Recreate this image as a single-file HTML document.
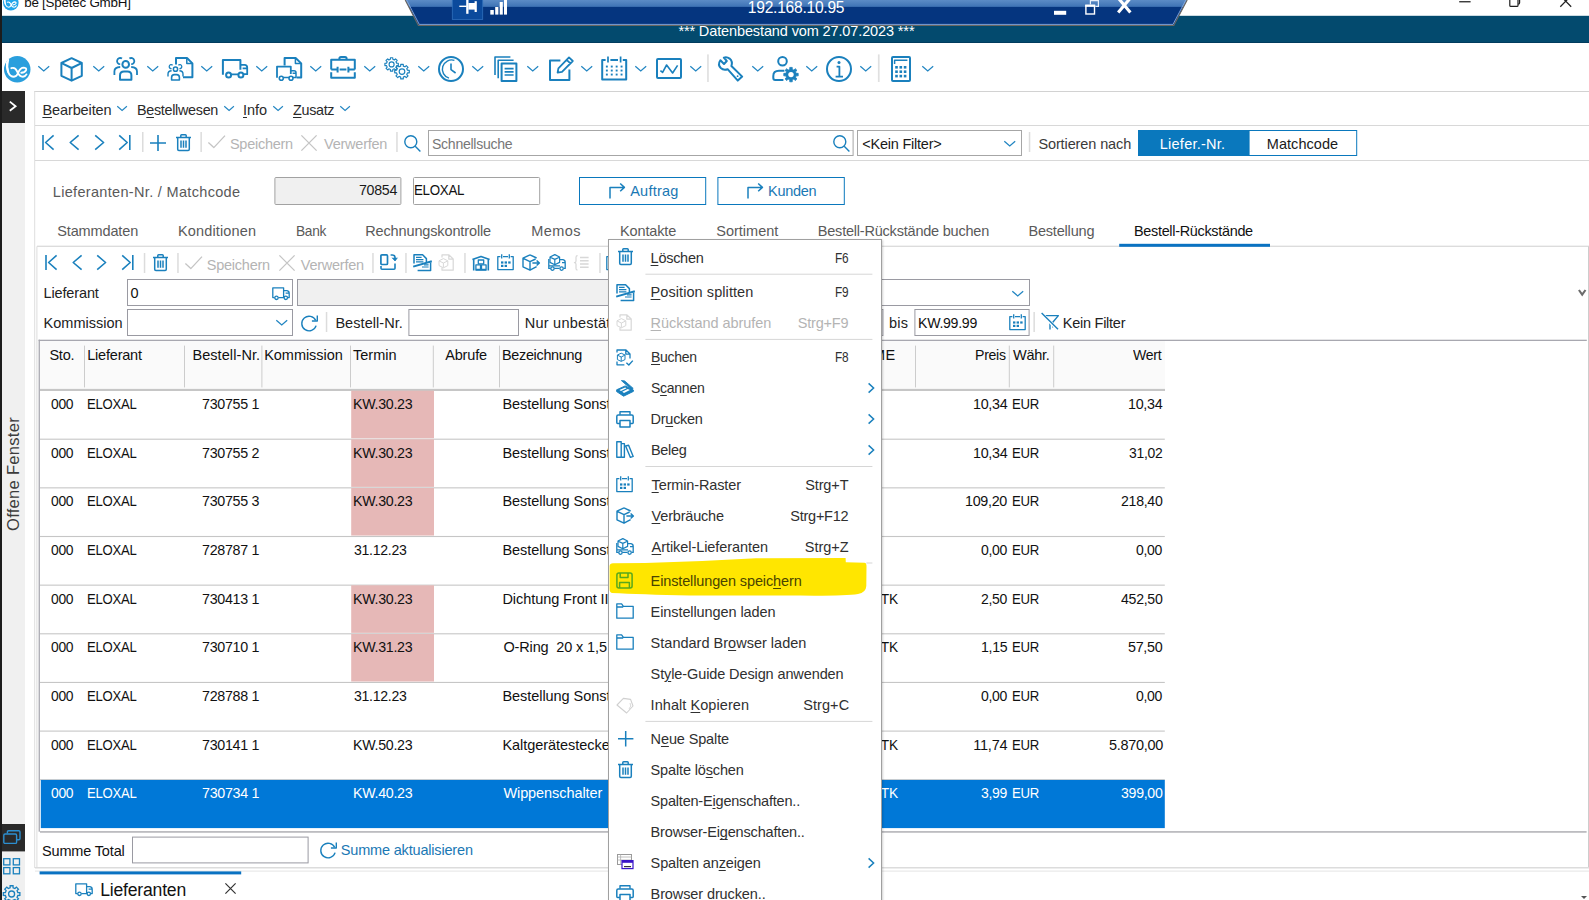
<!DOCTYPE html>
<html lang="de"><head><meta charset="utf-8"><title>be [Spetec GmbH]</title>
<style>
html,body{margin:0;padding:0;background:#fff;}
body{width:1589px;height:900px;position:relative;overflow:hidden;font:14.5px/20px 'Liberation Sans', sans-serif;color:#1a1a1a;}
body>div,body>span,body>svg{position:absolute;}
span{white-space:pre;}
u{text-decoration:underline;text-decoration-thickness:1px;text-underline-offset:2px;}
svg{overflow:visible;}

</style></head><body>
<svg style="left:1.70px;top:-5.90px" width="17.60" height="17.60" viewBox="1.70 -5.90 17.60 17.60"><g transform="translate(10.50,2.90) scale(0.5865) translate(-17.55,-68.45)"><circle cx="17.55" cy="68.45" r="13.3" fill="#22a6ea"/><g fill="none" stroke="#fff" stroke-linecap="round" stroke-linejoin="round"><path d="M8.5,59.2 Q6.4,66.6 8.9,72.4 Q10.4,76 14.2,76 Q17,75.8 18.4,72.2 Q20.4,66.8 24.2,66.8 Q27.2,67.2 26.4,69.4 Q25.4,71.8 21.6,72" stroke-width="1.9"/><path d="M7.4,61.6 Q6.6,66 8.4,71" stroke-width="2.2"/><path d="M11.6,67.4 Q15.4,66 17.4,70.6 Q19.6,76 23.2,76 Q25.6,75.8 26.8,73.6" stroke-width="1.9"/></g></g></svg>
<span style="left:24.20px;top:-6.74px;font-size:13.4px;color:#111;letter-spacing:-0.23px;">be [Spetec GmbH]</span>
<svg style="left:1459px;top:1px" width="12" height="2" viewBox="1459 1 12 2"><rect x="1459.2" y="1.1" width="11.4" height="1.3" fill="#2a2a2a"/></svg>
<svg style="left:1505px;top:0px;" width="20" height="10" viewBox="0 0 20 10"><g fill="none" stroke="#1e1e1e" stroke-width="1.2"><path d="M4.8,-2 V5.4 Q4.8,6.4 5.8,6.4 H12 Q13,6.4 13,5.4 V-2"/><path d="M13.2,4.2 Q14.6,4.2 14.6,2.8 V-2"/></g></svg>
<svg style="left:1560px;top:-5px;" width="12" height="12" viewBox="0 0 12 12"><path d="M0.3,0.6 L11.2,11.8 M11.2,0.6 L0.3,11.8" stroke="#222" stroke-width="1.25" fill="none"/></svg>
<svg style="left:0px;top:15px" width="1589" height="28" viewBox="0 15 1589 28"><rect x="0" y="15.8" width="1589" height="27.2" fill="#034a6e"/><rect x="0" y="42.2" width="1589" height="0.8" fill="#02395a"/></svg>
<span style="left:678.40px;top:21.18px;color:#fff;letter-spacing:-0.12px;">*** Datenbestand vom 27.07.2023 ***</span>
<svg style="left:400px;top:0" width="800" height="28" viewBox="400 0 800 28">
<defs><linearGradient id="rg" x1="0" y1="0" x2="0" y2="1"><stop offset="0" stop-color="#5b8bc6"/><stop offset="0.255" stop-color="#3f74b6"/><stop offset="0.262" stop-color="#05357f"/><stop offset="1" stop-color="#05357f"/></linearGradient></defs>
<path d="M405.2,0 L418.4,25.4 H1173.8 L1187.2,0 Z" fill="url(#rg)"/>
<path d="M405.2,0 L418.4,25.4 H1173.8 L1187.2,0" fill="none" stroke="#6b6660" stroke-width="1.1"/>
<path d="M406.6,0 L419.3,24.4 H1173 L1185.8,0" fill="none" stroke="#86a8dc" stroke-width="0.9"/>
<rect x="452.3" y="-1" width="30.4" height="20.4" fill="#0b4a9c" stroke="#2f6fbb" stroke-width="0.8"/>
<g fill="#fff"><rect x="459.3" y="5.6" width="7.4" height="1.4"/><rect x="466.2" y="-1" width="2.3" height="14.8"/><rect x="468.4" y="3" width="7" height="6.6"/><rect x="474.6" y="1.2" width="2.2" height="10.8"/>
<rect x="490.3" y="10" width="3.5" height="4.6"/><rect x="495.2" y="7" width="3.2" height="7.6"/><rect x="499.7" y="2" width="3.1" height="12.6"/><rect x="504" y="-1" width="3" height="15.6"/>
<rect x="1054" y="10.8" width="12.2" height="4"/></g>
<g fill="none" stroke="#fff"><rect x="1085.9" y="5.8" width="8.6" height="8.2" stroke-width="1.4"/><path d="M1085.2,5.6 H1095.2" stroke-width="2.2"/><path d="M1090.4,4.4 V0.6 H1098.4 V6.4 H1095.4" stroke-width="1.2" stroke="#e6eefa"/>
<path d="M1118.2,-2 L1130.4,12.4 M1130.4,-2 L1118.2,12.4" stroke-width="3.1"/></g>
</svg>
<span style="left:747.80px;top:-2.41px;font-size:15.6px;color:#fff;letter-spacing:-0.25px;">192.168.10.95</span>
<svg style="left:0px;top:0px" width="25" height="900" viewBox="0 0 25 900"><rect x="0" y="0" width="2" height="900" fill="#1c1c1c"/><rect x="2" y="123" width="23" height="777" fill="#f0f0f0"/><rect x="2" y="91" width="23" height="32" fill="#2a2a2a"/></svg>
<svg style="left:8.6px;top:100.6px;" width="8" height="10.4" viewBox="0 0 8 10.4"><path d="M0.8,0.6 L6.6,5.2 L0.8,9.8" fill="none" stroke="#fff" stroke-width="1.8"/></svg>
<span style="left:12.5px;top:474px;font-size:16.5px;color:#3c3c3c;letter-spacing:0.3px;transform:translate(-50%,-50%) rotate(-90deg);transform-origin:center;">Offene Fenster</span>
<svg style="left:2px;top:824px" width="23" height="28" viewBox="2 824 23 28"><rect x="2" y="824" width="23" height="27.4" fill="#2a2a2a"/></svg>
<svg style="left:3.4px;top:830.4px;" width="18" height="14.4" viewBox="0 0 18 14.4"><g fill="none" stroke="#2c8fd0" stroke-width="1.4"><path d="M4.4,3.6 V2 Q4.4,0.8 5.6,0.8 H15.8 Q17,0.8 17,2 V8.6 Q17,9.8 15.8,9.8 H14"/><rect x="0.8" y="4" width="12.8" height="9.4" rx="1.2"/></g></svg>
<svg style="left:3.4px;top:857.8px;" width="18" height="17" viewBox="0 0 18 17"><g fill="none" stroke="#1a80bd" stroke-width="1.3"><rect x="0.7" y="0.7" width="6.2" height="6.2"/><rect x="10.3" y="0.7" width="6.2" height="6.2"/><rect x="0.7" y="9.6" width="6.2" height="6.2"/><rect x="10.3" y="9.6" width="6.2" height="6.2"/></g></svg>
<svg style="left:3.2px;top:884.6px;" width="18" height="18" viewBox="0 0 18 18"><g fill="none" stroke="#1a80bd" stroke-width="1.3"><path d="M16.87,7.56 L16.87,10.44 L14.82,10.49 L14.06,12.34 L15.47,13.83 L13.43,15.87 L11.94,14.46 L10.09,15.22 L10.04,17.27 L7.16,17.27 L7.11,15.22 L5.26,14.46 L3.77,15.87 L1.73,13.83 L3.14,12.34 L2.38,10.49 L0.33,10.44 L0.33,7.56 L2.38,7.51 L3.14,5.66 L1.73,4.17 L3.77,2.13 L5.26,3.54 L7.11,2.78 L7.16,0.73 L10.04,0.73 L10.09,2.78 L11.94,3.54 L13.43,2.13 L15.47,4.17 L14.06,5.66 L14.82,7.51 Z"/><circle cx="8.6" cy="9" r="3"/></g></svg>
<svg style="left:3.30px;top:54.55px" width="28.50" height="28.50" viewBox="3.30 54.55 28.50 28.50"><g transform="translate(17.55,68.80) scale(0.9962) translate(-17.55,-68.45)"><circle cx="17.55" cy="68.45" r="13.3" fill="#2a9fdd"/><g fill="none" stroke="#fff" stroke-linecap="round" stroke-linejoin="round"><path d="M8.5,59.2 Q6.4,66.6 8.9,72.4 Q10.4,76 14.2,76 Q17,75.8 18.4,72.2 Q20.4,66.8 24.2,66.8 Q27.2,67.2 26.4,69.4 Q25.4,71.8 21.6,72" stroke-width="1.9"/><path d="M7.4,61.6 Q6.6,66 8.4,71" stroke-width="2.2"/><path d="M11.6,67.4 Q15.4,66 17.4,70.6 Q19.6,76 23.2,76 Q25.6,75.8 26.8,73.6" stroke-width="1.9"/></g></g></svg>
<svg style="left:60.2px;top:55.8px;" width="26" height="26" viewBox="0 0 26 26"><g fill="none" stroke="#1a80bd" stroke-width="2" stroke-linejoin="round" stroke-linecap="butt" ><path d="M11.6,2.2 L21.8,7 V19.8 L11.6,24.7 L1.4,19.8 V7 Z"/><path d="M1.6,7.2 L11.6,12 L21.6,7.2 M11.6,12 V24.4"/></g></svg>
<svg style="left:113.2px;top:55.8px;" width="26" height="26" viewBox="0 0 26 26"><g fill="none" stroke="#1a80bd" stroke-width="2" stroke-linejoin="round" stroke-linecap="butt" ><circle cx="12.7" cy="8.4" r="3.3"/><path d="M7,23.8 V19.4 Q7,15.6 11,15.6 H14.4 Q18.4,15.6 18.4,19.4 V23.8 Z"/><path d="M9,2.6 A3.1,3.1 0 1 0 7.2,8.2 M16.4,2.6 A3.1,3.1 0 1 1 18.2,8.2" stroke-width="1.8"/><path d="M1.4,19 V15.4 Q1.4,11.2 7.2,11 M24,19 V15.4 Q24,11.2 18.2,11" stroke-width="1.8"/></g></svg>
<svg style="left:167.2px;top:55.8px;" width="26" height="26" viewBox="0 0 26 26"><g fill="none" stroke="#1a80bd" stroke-width="2" stroke-linejoin="round" stroke-linecap="butt" ><path d="M9,8.4 V2 H20 L25.4,7.4 V21.2 H16"/><path d="M19.8,2.2 V7.6 H25.2" stroke-width="1.5"/><circle cx="8.5" cy="13.2" r="2.1" stroke-width="1.5"/><path d="M4.6,24 V21.4 Q4.6,18.6 7.4,18.6 H9.6 Q12.4,18.6 12.4,21.4 V24 Z" stroke-width="1.6"/><path d="M5.6,9.2 A2,2 0 1 0 4.6,12.6 M11.4,9.2 A2,2 0 1 1 12.4,12.6" stroke-width="1.3"/><path d="M1,20.4 V18 Q1,15 4.6,14.8 M16,20.4 V18 Q16,15 12.4,14.8" stroke-width="1.4"/></g></svg>
<svg style="left:221.6px;top:59.4px;" width="26" height="26" viewBox="0 0 26 26"><g fill="none" stroke="#1a80bd" stroke-width="2" stroke-linejoin="round" stroke-linecap="butt" ><path d="M0.9,15.8 V0.9 H18.4 V10.8"/><path d="M18.4,5.8 H22.6 Q25.2,5.8 25.2,8.4 V15.2 H21.6 M20.6,9.3 H24.6 M9.4,15.3 H16" stroke-width="1.8"/><circle cx="6.6" cy="16.1" r="2.5" fill="#fff"/><circle cx="18.9" cy="16.1" r="2.5" fill="#fff"/></g></svg>
<svg style="left:275.8px;top:55.8px;" width="26" height="26" viewBox="0 0 26 26"><g fill="none" stroke="#1a80bd" stroke-width="2" stroke-linejoin="round" stroke-linecap="butt" ><path d="M8.6,9.4 V2 H19.6 L25.2,7.4 V21.4 H20.6"/><path d="M19.4,2.2 V7.6 H25" stroke-width="1.5"/><path d="M1,21.8 V10.6 H14.8 V18" stroke-width="1.8"/><path d="M14.8,14.8 H18 Q20,14.8 20,16.8 V21.4 H17 M16.6,17.2 H19.6 M7.6,21.6 H13" stroke-width="1.5"/><circle cx="5.3" cy="22.2" r="2" stroke-width="1.6" fill="#fff"/><circle cx="15" cy="22.2" r="2" stroke-width="1.6" fill="#fff"/></g></svg>
<svg style="left:330.2px;top:56.2px;" width="26" height="26" viewBox="0 0 26 26"><g fill="none" stroke="#1a80bd" stroke-width="2" stroke-linejoin="round" stroke-linecap="butt" ><path d="M9.4,3.4 V2.6 Q9.4,1 11,1 H15 Q16.6,1 16.6,2.6 V3.4"/><path d="M1.2,13.6 V3.8 H24.8 V13.6 M1.2,16.2 V21.8 H24.8 V16.2"/><path d="M1.2,13.6 H7.6 M18.4,13.6 H24.8 M7.6,10.8 V16.6 M18.4,10.8 V16.6 M9.6,13.6 H16.4"/></g></svg>
<svg style="left:384.2px;top:57px;" width="26" height="26" viewBox="0 0 26 26"><g fill="none" stroke="#1a80bd" stroke-width="2" stroke-linejoin="round" stroke-linecap="butt" ><path d="M14.30,6.23 L14.30,8.57 L12.66,8.61 L12.03,10.12 L13.16,11.31 L11.51,12.96 L10.32,11.83 L8.81,12.46 L8.77,14.10 L6.43,14.10 L6.39,12.46 L4.88,11.83 L3.69,12.96 L2.04,11.31 L3.17,10.12 L2.54,8.61 L0.90,8.57 L0.90,6.23 L2.54,6.19 L3.17,4.68 L2.04,3.49 L3.69,1.84 L4.88,2.97 L6.39,2.34 L6.43,0.70 L8.77,0.70 L8.81,2.34 L10.32,2.97 L11.51,1.84 L13.16,3.49 L12.03,4.68 L12.66,6.19 Z" stroke-width="1.15"/><circle cx="7.6" cy="7.4" r="2.5" stroke-width="1.15"/><path d="M25.29,13.33 L25.29,15.87 L23.45,15.91 L22.77,17.53 L24.05,18.86 L22.26,20.65 L20.93,19.37 L19.31,20.05 L19.27,21.89 L16.73,21.89 L16.69,20.05 L15.07,19.37 L13.74,20.65 L11.95,18.86 L13.23,17.53 L12.55,15.91 L10.71,15.87 L10.71,13.33 L12.55,13.29 L13.23,11.67 L11.95,10.34 L13.74,8.55 L15.07,9.83 L16.69,9.15 L16.73,7.31 L19.27,7.31 L19.31,9.15 L20.93,9.83 L22.26,8.55 L24.05,10.34 L22.77,11.67 L23.45,13.29 Z" stroke-width="1.15"/><circle cx="18" cy="14.6" r="2.8" stroke-width="1.15"/></g></svg>
<svg style="left:438.1px;top:55.8px;" width="26" height="26" viewBox="0 0 26 26"><g fill="none" stroke="#1a80bd" stroke-width="2" stroke-linejoin="round" stroke-linecap="butt" ><circle cx="13" cy="13" r="12"/><path d="M11,22.2 A9.3,9.3 0 0 1 16.4,4.3" stroke-width="1.4"/><path d="M13,7.4 V13.6 L17.6,17" stroke-width="1.6"/></g></svg>
<svg style="left:494.2px;top:55.8px;" width="26" height="26" viewBox="0 0 26 26"><g fill="none" stroke="#1a80bd" stroke-width="2" stroke-linejoin="round" stroke-linecap="butt" ><path d="M1,19 V1 H16.4" stroke-width="1.6"/><path d="M4.2,22.2 V4.2 H19.6" stroke-width="1.6"/><path d="M7.6,7.4 H22.4 V25 H7.6 Z"/><path d="M10.6,12.6 H19.6 M10.6,15.8 H19.6 M10.6,19 H19.6" stroke-width="1.7"/></g></svg>
<svg style="left:548.8px;top:55.8px;" width="26" height="26" viewBox="0 0 26 26"><g fill="none" stroke="#1a80bd" stroke-width="2" stroke-linejoin="round" stroke-linecap="butt" ><path d="M11.4,4.6 H1 V24 H20.4 V13.4"/><path d="M8.6,16.6 L9.4,12.4 L20,1.4 L23.8,5 L13,15.8 Z M17.6,3.8 L21.4,7.4" stroke-width="1.8"/></g></svg>
<svg style="left:601.3px;top:56px;" width="26" height="26" viewBox="0 0 26 26"><g fill="none" stroke="#1a80bd" stroke-width="2" stroke-linejoin="round" stroke-linecap="butt" ><path d="M4.6,4 H1.2 V23.4 H25.2 V4 H21.8 M9.4,4 H17"/><path d="M7,0.4 V6.4 M19.6,0.4 V6.4" stroke-width="1.7"/><rect x="4.9" y="9.6" width="1.9" height="1.9" fill="#1a80bd" stroke="none"/><rect x="9.8" y="9.6" width="1.9" height="1.9" fill="#1a80bd" stroke="none"/><rect x="14.700000000000001" y="9.6" width="1.9" height="1.9" fill="#1a80bd" stroke="none"/><rect x="19.6" y="9.6" width="1.9" height="1.9" fill="#1a80bd" stroke="none"/><rect x="4.9" y="13.6" width="1.9" height="1.9" fill="#1a80bd" stroke="none"/><rect x="9.8" y="13.6" width="1.9" height="1.9" fill="#1a80bd" stroke="none"/><rect x="14.700000000000001" y="13.6" width="1.9" height="1.9" fill="#1a80bd" stroke="none"/><rect x="19.6" y="13.6" width="1.9" height="1.9" fill="#1a80bd" stroke="none"/><rect x="4.9" y="17.6" width="1.9" height="1.9" fill="#1a80bd" stroke="none"/><rect x="9.8" y="17.6" width="1.9" height="1.9" fill="#1a80bd" stroke="none"/><rect x="14.700000000000001" y="17.6" width="1.9" height="1.9" fill="#1a80bd" stroke="none"/><rect x="19.6" y="17.6" width="1.9" height="1.9" fill="#1a80bd" stroke="none"/></g></svg>
<svg style="left:655.5px;top:57.8px;" width="26" height="26" viewBox="0 0 26 26"><g fill="none" stroke="#1a80bd" stroke-width="2" stroke-linejoin="round" stroke-linecap="butt" ><rect x="1" y="1" width="24" height="19" rx="1"/><path d="M4.4,12.6 L6.6,14.4 L10.6,7 L16.6,15 L21.6,7.4" stroke-width="1.6"/></g></svg>
<svg style="left:717.4px;top:55.8px;" width="26" height="26" viewBox="0 0 26 26"><g fill="none" stroke="#1a80bd" stroke-width="2" stroke-linejoin="round" stroke-linecap="butt" ><path d="M3.4,4.2 Q0.4,8.6 3.8,12 Q6.6,14.6 10.6,13.2 L20.8,24.6 L25.2,20.6 L14.4,10 Q16,5.6 12.6,2.6 Q10,0.6 6.8,1.6 L9.8,5 L7,8 Z"/><circle cx="20.6" cy="20.2" r="0.9" fill="#1a80bd" stroke="none"/></g></svg>
<svg style="left:771.6px;top:55.8px;" width="26" height="26" viewBox="0 0 26 26"><g fill="none" stroke="#1a80bd" stroke-width="2" stroke-linejoin="round" stroke-linecap="butt" ><circle cx="10.5" cy="5.2" r="4.3"/><path d="M11.4,24 H3.2 Q1.3,24 1.3,22 V20 Q1.3,14.8 7,14.8 H12.4"/><path d="M26.19,17.34 L26.19,19.86 L24.15,19.84 L23.52,21.37 L24.97,22.80 L23.20,24.57 L21.77,23.12 L20.24,23.75 L20.26,25.79 L17.74,25.79 L17.76,23.75 L16.23,23.12 L14.80,24.57 L13.03,22.80 L14.48,21.37 L13.85,19.84 L11.81,19.86 L11.81,17.34 L13.85,17.36 L14.48,15.83 L13.03,14.40 L14.80,12.63 L16.23,14.08 L17.76,13.45 L17.74,11.41 L20.26,11.41 L20.24,13.45 L21.77,14.08 L23.20,12.63 L24.97,14.40 L23.52,15.83 L24.15,17.36 Z" fill="#1a80bd" stroke-width="0.8"/><circle cx="19" cy="18.6" r="2.7" fill="#fff" stroke="none"/></g></svg>
<svg style="left:826.2px;top:55.8px;" width="26" height="26" viewBox="0 0 26 26"><g fill="none" stroke="#1a80bd" stroke-width="2" stroke-linejoin="round" stroke-linecap="butt" ><circle cx="13" cy="13" r="12"/><circle cx="13" cy="6.6" r="1.5" fill="#1a80bd" stroke="none"/><path d="M10.6,10.6 H13.4 V20.4 M9.6,20.6 H17" stroke-width="1.8"/></g></svg>
<svg style="left:890.8px;top:55.8px;" width="26" height="26" viewBox="0 0 26 26"><g fill="none" stroke="#1a80bd" stroke-width="2" stroke-linejoin="round" stroke-linecap="butt" ><rect x="1" y="1" width="18" height="24" rx="1"/><path d="M3.6,8 V4.2 H16.4" stroke-width="1.5"/><rect x="4.2" y="10.0" width="2.6" height="2.6" fill="#1a80bd" stroke="none"/><rect x="8.5" y="10.0" width="2.6" height="2.6" fill="#1a80bd" stroke="none"/><rect x="12.8" y="10.0" width="2.6" height="2.6" fill="#1a80bd" stroke="none"/><rect x="4.2" y="14.4" width="2.6" height="2.6" fill="#1a80bd" stroke="none"/><rect x="8.5" y="14.4" width="2.6" height="2.6" fill="#1a80bd" stroke="none"/><rect x="12.8" y="14.4" width="2.6" height="2.6" fill="#1a80bd" stroke="none"/><rect x="4.2" y="18.8" width="2.6" height="2.6" fill="#1a80bd" stroke="none"/><rect x="8.5" y="18.8" width="2.6" height="2.6" fill="#1a80bd" stroke="none"/><rect x="12.8" y="18.8" width="2.6" height="2.6" fill="#1a80bd" stroke="none"/></g></svg>
<svg style="left:38.3px;top:65.5px;" width="11.5" height="5.6" viewBox="0 0 11.5 5.6"><path d="M0.3,0.3 L5.75,5 L11.2,0.3" fill="none" stroke="#2386c2" stroke-width="1.25"/></svg>
<svg style="left:92.7px;top:65.5px;" width="11.5" height="5.6" viewBox="0 0 11.5 5.6"><path d="M0.3,0.3 L5.75,5 L11.2,0.3" fill="none" stroke="#2386c2" stroke-width="1.25"/></svg>
<svg style="left:146.9px;top:65.5px;" width="11.5" height="5.6" viewBox="0 0 11.5 5.6"><path d="M0.3,0.3 L5.75,5 L11.2,0.3" fill="none" stroke="#2386c2" stroke-width="1.25"/></svg>
<svg style="left:201.2px;top:65.5px;" width="11.5" height="5.6" viewBox="0 0 11.5 5.6"><path d="M0.3,0.3 L5.75,5 L11.2,0.3" fill="none" stroke="#2386c2" stroke-width="1.25"/></svg>
<svg style="left:255.5px;top:65.5px;" width="11.5" height="5.6" viewBox="0 0 11.5 5.6"><path d="M0.3,0.3 L5.75,5 L11.2,0.3" fill="none" stroke="#2386c2" stroke-width="1.25"/></svg>
<svg style="left:309.8px;top:65.5px;" width="11.5" height="5.6" viewBox="0 0 11.5 5.6"><path d="M0.3,0.3 L5.75,5 L11.2,0.3" fill="none" stroke="#2386c2" stroke-width="1.25"/></svg>
<svg style="left:364px;top:65.5px;" width="11.5" height="5.6" viewBox="0 0 11.5 5.6"><path d="M0.3,0.3 L5.75,5 L11.2,0.3" fill="none" stroke="#2386c2" stroke-width="1.25"/></svg>
<svg style="left:418.2px;top:65.5px;" width="11.5" height="5.6" viewBox="0 0 11.5 5.6"><path d="M0.3,0.3 L5.75,5 L11.2,0.3" fill="none" stroke="#2386c2" stroke-width="1.25"/></svg>
<svg style="left:472.4px;top:65.5px;" width="11.5" height="5.6" viewBox="0 0 11.5 5.6"><path d="M0.3,0.3 L5.75,5 L11.2,0.3" fill="none" stroke="#2386c2" stroke-width="1.25"/></svg>
<svg style="left:526.6px;top:65.5px;" width="11.5" height="5.6" viewBox="0 0 11.5 5.6"><path d="M0.3,0.3 L5.75,5 L11.2,0.3" fill="none" stroke="#2386c2" stroke-width="1.25"/></svg>
<svg style="left:580.9px;top:65.5px;" width="11.5" height="5.6" viewBox="0 0 11.5 5.6"><path d="M0.3,0.3 L5.75,5 L11.2,0.3" fill="none" stroke="#2386c2" stroke-width="1.25"/></svg>
<svg style="left:635.2px;top:65.5px;" width="11.5" height="5.6" viewBox="0 0 11.5 5.6"><path d="M0.3,0.3 L5.75,5 L11.2,0.3" fill="none" stroke="#2386c2" stroke-width="1.25"/></svg>
<svg style="left:689.6px;top:65.5px;" width="11.5" height="5.6" viewBox="0 0 11.5 5.6"><path d="M0.3,0.3 L5.75,5 L11.2,0.3" fill="none" stroke="#2386c2" stroke-width="1.25"/></svg>
<svg style="left:751.8px;top:65.5px;" width="11.5" height="5.6" viewBox="0 0 11.5 5.6"><path d="M0.3,0.3 L5.75,5 L11.2,0.3" fill="none" stroke="#2386c2" stroke-width="1.25"/></svg>
<svg style="left:805.8px;top:65.5px;" width="11.5" height="5.6" viewBox="0 0 11.5 5.6"><path d="M0.3,0.3 L5.75,5 L11.2,0.3" fill="none" stroke="#2386c2" stroke-width="1.25"/></svg>
<svg style="left:859.8px;top:65.5px;" width="11.5" height="5.6" viewBox="0 0 11.5 5.6"><path d="M0.3,0.3 L5.75,5 L11.2,0.3" fill="none" stroke="#2386c2" stroke-width="1.25"/></svg>
<svg style="left:921.8px;top:65.5px;" width="11.5" height="5.6" viewBox="0 0 11.5 5.6"><path d="M0.3,0.3 L5.75,5 L11.2,0.3" fill="none" stroke="#2386c2" stroke-width="1.25"/></svg>
<svg style="left:34px;top:54px" width="1555" height="814" viewBox="34 54 1555 814"><rect x="707.1" y="54.4" width="1.7" height="27.6" fill="#e0e0e0"/><rect x="877.9" y="54.4" width="1.7" height="27.6" fill="#e0e0e0"/><rect x="34" y="91" width="1555" height="1" fill="#d2d2d2"/><rect x="34.2" y="91" width="1" height="777" fill="#dedede"/></svg>
<span style="left:42.40px;top:100.28px;color:#2a2a2a;letter-spacing:-0.1px;"><u>B</u>earbeiten</span>
<svg style="left:117.2px;top:106.2px;" width="10" height="5" viewBox="0 0 11.3 5.6"><path d="M0.3,0.3 L5.75,5 L11.2,0.3" fill="none" stroke="#2386c2" stroke-width="1.3"/></svg>
<span style="left:136.81px;top:100.28px;color:#2a2a2a;letter-spacing:-0.3px;transform:scaleX(0.9901);transform-origin:0 0;">B<u>e</u>stellwesen</span>
<svg style="left:223.6px;top:106.2px;" width="10" height="5" viewBox="0 0 11.3 5.6"><path d="M0.3,0.3 L5.75,5 L11.2,0.3" fill="none" stroke="#2386c2" stroke-width="1.3"/></svg>
<span style="left:243.00px;top:100.28px;color:#2a2a2a;letter-spacing:-0.07px;"><u>I</u>nfo</span>
<svg style="left:273.2px;top:106.2px;" width="10" height="5" viewBox="0 0 11.3 5.6"><path d="M0.3,0.3 L5.75,5 L11.2,0.3" fill="none" stroke="#2386c2" stroke-width="1.3"/></svg>
<span style="left:293.20px;top:100.28px;color:#2a2a2a;letter-spacing:-0.3px;transform:scaleX(0.9880);transform-origin:0 0;"><u>Z</u>usatz</span>
<svg style="left:340.2px;top:106.2px;" width="10" height="5" viewBox="0 0 11.3 5.6"><path d="M0.3,0.3 L5.75,5 L11.2,0.3" fill="none" stroke="#2386c2" stroke-width="1.3"/></svg>
<svg style="left:35px;top:125px" width="1554" height="1" viewBox="35 125 1554 1"><rect x="35" y="125" width="1554" height="1" fill="#d8d8d8"/></svg>
<svg style="left:42.4px;top:135.4px;" width="13" height="15" viewBox="0 0 13 15"><g fill="none" stroke="#1a80bd" stroke-width="1.6" stroke-linejoin="round" stroke-linecap="butt" ><path d="M1,0 V15 M11.6,0.4 L3.6,7.5 L11.6,14.6"/></g></svg>
<svg style="left:69.2px;top:135.4px;" width="11" height="15" viewBox="0 0 11 15"><g fill="none" stroke="#1a80bd" stroke-width="1.6" stroke-linejoin="round" stroke-linecap="butt" ><path d="M9.6,0.4 L1.2,7.5 L9.6,14.6"/></g></svg>
<svg style="left:93.8px;top:135.4px;" width="11" height="15" viewBox="0 0 11 15"><g fill="none" stroke="#1a80bd" stroke-width="1.6" stroke-linejoin="round" stroke-linecap="butt" ><path d="M1.2,0.4 L9.6,7.5 L1.2,14.6"/></g></svg>
<svg style="left:118.4px;top:135.4px;" width="13" height="15" viewBox="0 0 13 15"><g fill="none" stroke="#1a80bd" stroke-width="1.6" stroke-linejoin="round" stroke-linecap="butt" ><path d="M11.8,0 V15 M1.2,0.4 L9.2,7.5 L1.2,14.6"/></g></svg>
<svg style="left:142px;top:132px" width="2" height="20" viewBox="142 132 2 20"><rect x="142" y="132" width="1.5" height="20" fill="#dcdcdc"/></svg>
<svg style="left:150.2px;top:135px;" width="16" height="16" viewBox="0 0 16 16"><g fill="none" stroke="#1a80bd" stroke-width="1.6" stroke-linejoin="round" stroke-linecap="butt" ><path d="M0,8.0 H16 M8.0,0 V16"/></g></svg>
<svg style="left:176.2px;top:134px;" width="15" height="17" viewBox="0 0 15 17"><g fill="none" stroke="#1a80bd" stroke-width="2" stroke-linejoin="round" stroke-linecap="butt" ><path d="M0,3.6 H15 M4.8,3.4 V1.6 Q4.8,0.8 5.6,0.8 H9.4 Q10.2,0.8 10.2,1.6 V3.4" stroke-width="1.5"/><path d="M1.7,4 V15.2 Q1.7,16.4 2.9,16.4 H12.1 Q13.3,16.4 13.3,15.2 V4" stroke-width="1.5"/><path d="M5,6.6 V13.8 M7.5,6.6 V13.8 M10,6.6 V13.8" stroke-width="1.5"/></g></svg>
<svg style="left:200px;top:132px" width="2" height="20" viewBox="200 132 2 20"><rect x="200.4" y="132" width="1.5" height="20" fill="#dcdcdc"/></svg>
<svg style="left:207.8px;top:135.2px;" width="18" height="13" viewBox="0 0 18 13"><g fill="none" stroke="#c4c4c4" stroke-width="1.3" stroke-linejoin="round" stroke-linecap="butt" ><path d="M0.4,7.6 L5.8,12.6 L17,0.6"/></g></svg>
<span style="left:229.90px;top:133.68px;color:#b4b4b4;letter-spacing:-0.25px;">Speichern</span>
<svg style="left:301.4px;top:135.2px;" width="16" height="16" viewBox="0 0 16 16"><g fill="none" stroke="#c4c4c4" stroke-width="1.3" stroke-linejoin="round" stroke-linecap="butt" ><path d="M0.4,0.4 L15.6,15.6 M15.6,0.4 L0.4,15.6"/></g></svg>
<span style="left:324.10px;top:133.68px;color:#b4b4b4;letter-spacing:-0.25px;">Verwerfen</span>
<svg style="left:396px;top:132px" width="2" height="20" viewBox="396 132 2 20"><rect x="396.2" y="132" width="1.5" height="20" fill="#dcdcdc"/></svg>
<svg style="left:403.8px;top:135px;" width="17" height="17" viewBox="0 0 17 17"><g fill="none" stroke="#1a80bd" stroke-width="1.4" stroke-linejoin="round" stroke-linecap="butt" ><circle cx="6.8" cy="6.8" r="6"/><path d="M11.2,11.2 L16.4,16.4"/></g></svg>
<svg style="left:428px;top:130px" width="426" height="26" viewBox="428 130 426 26"><rect x="428.5" y="130.5" width="424.6" height="25" fill="#fff" stroke="#a6a6a6" stroke-width="1"/></svg>
<span style="left:431.83px;top:133.68px;color:#777;letter-spacing:-0.3px;transform:scaleX(0.9718);transform-origin:0 0;">Schnellsuche</span>
<svg style="left:832.6px;top:135px;" width="17" height="17" viewBox="0 0 17 17"><g fill="none" stroke="#1a80bd" stroke-width="1.4" stroke-linejoin="round" stroke-linecap="butt" ><circle cx="6.8" cy="6.8" r="6"/><path d="M11.2,11.2 L16.4,16.4"/></g></svg>
<svg style="left:857px;top:130px" width="165" height="26" viewBox="857 130 165 26"><rect x="857.5" y="130.5" width="164" height="25" fill="#fff" stroke="#a6a6a6" stroke-width="1"/></svg>
<span style="left:862.20px;top:133.68px;letter-spacing:-0.22px;">&lt;Kein Filter&gt;</span>
<svg style="left:1004px;top:140.6px;" width="11.3" height="5.6" viewBox="0 0 11.3 5.6"><path d="M0.3,0.3 L5.75,5 L11.2,0.3" fill="none" stroke="#2386c2" stroke-width="1.3"/></svg>
<svg style="left:1028px;top:132px" width="3" height="20" viewBox="1028 132 3 20"><rect x="1028.8" y="132" width="1.5" height="20" fill="#dcdcdc"/></svg>
<span style="left:1038.40px;top:133.68px;color:#3a3a3a;letter-spacing:-0.11px;">Sortieren nach</span>
<svg style="left:1138px;top:130px" width="111" height="26" viewBox="1138 130 111 26"><rect x="1138" y="130" width="111" height="26" fill="#0a78bd"/></svg>
<span style="left:1159.80px;top:133.68px;color:#fff;letter-spacing:0.24px;">Liefer.-Nr.</span>
<svg style="left:1248px;top:130px" width="110" height="26" viewBox="1248 130 110 26"><rect x="1249.1" y="130.5" width="107.6" height="25" fill="#fff" stroke="#0a78bd" stroke-width="1"/></svg>
<span style="left:1266.80px;top:133.68px;letter-spacing:0.05px;">Matchcode</span>
<svg style="left:35px;top:160px" width="1554" height="1" viewBox="35 160 1554 1"><rect x="35" y="160" width="1554" height="1" fill="#d8d8d8"/></svg>
<span style="left:52.80px;top:181.78px;color:#5a5a5a;letter-spacing:0.32px;">Lieferanten-Nr. / Matchcode</span>
<svg style="left:274px;top:177px" width="128" height="28" viewBox="274 177 128 28"><rect x="274.9" y="177.5" width="126" height="27" fill="#f0f0f0" stroke="#a2a2a2" stroke-width="1" rx="1"/></svg>
<span style="left:359.20px;top:180.18px;letter-spacing:-0.3px;transform:scaleX(0.9794);transform-origin:0 0;">70854</span>
<svg style="left:413px;top:177px" width="128" height="28" viewBox="413 177 128 28"><rect x="413.5" y="177.5" width="126.2" height="27" fill="#fff" stroke="#a2a2a2" stroke-width="1" rx="1"/></svg>
<span style="left:414.28px;top:180.18px;color:#111;letter-spacing:-0.3px;transform:scaleX(0.9196);transform-origin:0 0;">ELOXAL</span>
<svg style="left:579px;top:177px" width="128" height="28" viewBox="579 177 128 28"><rect x="579.5" y="177.5" width="126.2" height="27" fill="#fff" stroke="#0a78bd" stroke-width="1"/></svg>
<svg style="left:608.7px;top:182.9px;" width="17" height="16" viewBox="0 0 17 16"><g fill="none" stroke="#1a80bd" stroke-width="1.5" stroke-linejoin="round" stroke-linecap="butt" ><path d="M1,15.6 V4.4 H15.2 M11.2,0.5 L15.4,4.4 L11.2,8.3"/></g></svg>
<span style="left:630.20px;top:181.18px;color:#1a78b4;letter-spacing:0.23px;">Auftrag</span>
<svg style="left:717px;top:177px" width="128" height="28" viewBox="717 177 128 28"><rect x="717.9" y="177.5" width="126.4" height="27" fill="#fff" stroke="#0a78bd" stroke-width="1"/></svg>
<svg style="left:746.6px;top:182.9px;" width="17" height="16" viewBox="0 0 17 16"><g fill="none" stroke="#1a80bd" stroke-width="1.5" stroke-linejoin="round" stroke-linecap="butt" ><path d="M1,15.6 V4.4 H15.2 M11.2,0.5 L15.4,4.4 L11.2,8.3"/></g></svg>
<span style="left:768.00px;top:181.18px;color:#1a78b4;letter-spacing:-0.28px;">Kunden</span>
<span style="left:57.20px;top:221.38px;color:#5a5a5a;letter-spacing:-0.13px;">Stammdaten</span>
<span style="left:178.00px;top:221.38px;color:#5a5a5a;letter-spacing:0.14px;">Konditionen</span>
<span style="left:295.65px;top:221.38px;color:#5a5a5a;letter-spacing:-0.3px;transform:scaleX(0.9453);transform-origin:0 0;">Bank</span>
<span style="left:365.20px;top:221.38px;color:#5a5a5a;letter-spacing:-0.13px;">Rechnungskontrolle</span>
<span style="left:531.20px;top:221.38px;color:#5a5a5a;letter-spacing:0.45px;">Memos</span>
<span style="left:620.00px;top:221.38px;color:#5a5a5a;letter-spacing:-0.14px;">Kontakte</span>
<span style="left:716.20px;top:221.38px;color:#5a5a5a;letter-spacing:0.02px;">Sortiment</span>
<span style="left:817.80px;top:221.38px;color:#5a5a5a;letter-spacing:-0.21px;">Bestell-Rückstände buchen</span>
<span style="left:1028.40px;top:221.38px;color:#5a5a5a;letter-spacing:-0.18px;">Bestellung</span>
<span style="left:1133.81px;top:221.38px;color:#111;letter-spacing:-0.3px;transform:scaleX(0.9941);transform-origin:0 0;">Bestell-Rückstände</span>
<svg style="left:35px;top:243px" width="1554" height="629" viewBox="35 243 1554 629"><rect x="37" y="245.7" width="1552" height="1.1" fill="#d4d4d4"/><rect x="1119.2" y="243.8" width="150.8" height="3" fill="#0a72c2"/><rect x="36.4" y="246.4" width="1" height="621" fill="#dcdcdc"/><rect x="1588" y="246.4" width="1" height="621" fill="#cdcdcd"/><rect x="35" y="867" width="1554" height="1.5" fill="#dcdcdc"/><rect x="35" y="870.6" width="1554" height="1" fill="#e4e4e4"/></svg>
<svg style="left:44.8px;top:255px;" width="13" height="15" viewBox="0 0 13 15"><g fill="none" stroke="#1a80bd" stroke-width="1.6" stroke-linejoin="round" stroke-linecap="butt" ><path d="M1,0 V15 M11.6,0.4 L3.6,7.5 L11.6,14.6"/></g></svg>
<svg style="left:71.6px;top:255px;" width="11" height="15" viewBox="0 0 11 15"><g fill="none" stroke="#1a80bd" stroke-width="1.6" stroke-linejoin="round" stroke-linecap="butt" ><path d="M9.6,0.4 L1.2,7.5 L9.6,14.6"/></g></svg>
<svg style="left:96.4px;top:255px;" width="11" height="15" viewBox="0 0 11 15"><g fill="none" stroke="#1a80bd" stroke-width="1.6" stroke-linejoin="round" stroke-linecap="butt" ><path d="M1.2,0.4 L9.6,7.5 L1.2,14.6"/></g></svg>
<svg style="left:120.6px;top:255px;" width="13" height="15" viewBox="0 0 13 15"><g fill="none" stroke="#1a80bd" stroke-width="1.6" stroke-linejoin="round" stroke-linecap="butt" ><path d="M11.8,0 V15 M1.2,0.4 L9.2,7.5 L1.2,14.6"/></g></svg>
<svg style="left:143px;top:253px" width="3" height="20" viewBox="143 253 3 20"><rect x="143.8" y="253" width="1.5" height="20" fill="#dcdcdc"/></svg>
<svg style="left:152.6px;top:253.6px;" width="15" height="17" viewBox="0 0 15 17"><g fill="none" stroke="#1a80bd" stroke-width="2" stroke-linejoin="round" stroke-linecap="butt" ><path d="M0,3.6 H15 M4.8,3.4 V1.6 Q4.8,0.8 5.6,0.8 H9.4 Q10.2,0.8 10.2,1.6 V3.4" stroke-width="1.5"/><path d="M1.7,4 V15.2 Q1.7,16.4 2.9,16.4 H12.1 Q13.3,16.4 13.3,15.2 V4" stroke-width="1.5"/><path d="M5,6.6 V13.8 M7.5,6.6 V13.8 M10,6.6 V13.8" stroke-width="1.5"/></g></svg>
<svg style="left:177px;top:253px" width="2" height="20" viewBox="177 253 2 20"><rect x="177.2" y="253" width="1.5" height="20" fill="#dcdcdc"/></svg>
<svg style="left:184.6px;top:256px;" width="18" height="13" viewBox="0 0 18 13"><g fill="none" stroke="#c4c4c4" stroke-width="1.3" stroke-linejoin="round" stroke-linecap="butt" ><path d="M0.4,7.6 L5.8,12.6 L17,0.6"/></g></svg>
<span style="left:206.80px;top:254.68px;color:#b4b4b4;letter-spacing:-0.25px;">Speichern</span>
<svg style="left:278.6px;top:255.4px;" width="16" height="16" viewBox="0 0 16 16"><g fill="none" stroke="#c4c4c4" stroke-width="1.3" stroke-linejoin="round" stroke-linecap="butt" ><path d="M0.4,0.4 L15.6,15.6 M15.6,0.4 L0.4,15.6"/></g></svg>
<span style="left:300.80px;top:254.68px;color:#b4b4b4;letter-spacing:-0.25px;">Verwerfen</span>
<svg style="left:372px;top:253px" width="2" height="20" viewBox="372 253 2 20"><rect x="372.2" y="253" width="1.5" height="20" fill="#dcdcdc"/></svg>
<svg style="left:379.6px;top:254.4px;" width="18" height="16" viewBox="0 0 18 16"><g fill="none" stroke="#1a80bd" stroke-width="2" stroke-linejoin="round" stroke-linecap="butt" ><rect x="0.9" y="0.9" width="6.6" height="9.6" rx="1" stroke-width="1.7"/><path d="M1,12 V14.2 Q1,15.2 2,15.2 H14 Q15,15.2 15,14.2 V9.6" stroke-width="1.6"/><path d="M10.6,1 H12.4 Q15,1 15,3.6 V6.4" stroke-width="1.6"/><path d="M12.2,3.8 L15,6.8 L17.4,3.8" fill="#1a80bd" stroke-width="1"/></g></svg>
<svg style="left:405px;top:253px" width="2" height="20" viewBox="405 253 2 20"><rect x="405.2" y="253" width="1.5" height="20" fill="#dcdcdc"/></svg>
<svg style="left:412.6px;top:254px;" width="19" height="17" viewBox="0 0 19 17"><g fill="none" stroke="#1a80bd" stroke-width="2" stroke-linejoin="round" stroke-linecap="butt" ><path d="M1,9.4 V0.8 H9.6 L13.4,4.6 V8 M4.6,16.4 H17.6 V8.6" stroke-width="1.5"/><path d="M3,3.4 H8.6 M3,5.6 H10.4 M3,7.8 H10.4 M9,13 H15.6 M11,10.8 H15.6" stroke-width="1.2"/><path d="M0.2,12.6 L18.8,7.2" stroke-width="2"/></g></svg>
<svg style="left:438px;top:254px;" width="16" height="17" viewBox="0 0 16 17"><g fill="none" stroke="#d8d8d8" stroke-width="1.2" stroke-linejoin="round" stroke-linecap="butt" ><path d="M4,3.6 V0.8 H11 L15.2,5 V16.2 H4 V13.4 M10.8,1 V5.2 H15"/><path d="M5.4,4.6 L9.8,6.8 V11.6 L5.4,13.8 L1,11.6 V6.8 Z M1.2,7 L5.4,9 L9.6,7 M5.4,9 V13.6" stroke-width="1"/></g></svg>
<svg style="left:464px;top:253px" width="2" height="20" viewBox="464 253 2 20"><rect x="464.2" y="253" width="1.5" height="20" fill="#dcdcdc"/></svg>
<svg style="left:471.6px;top:254px;" width="18" height="17" viewBox="0 0 18 17"><g fill="none" stroke="#1a80bd" stroke-width="2" stroke-linejoin="round" stroke-linecap="butt" ><path d="M0.4,5.4 L9,2.4 L17.6,5.4 M1.7,5 V16.6 M16.3,5 V16.6" stroke-width="1.6"/><path d="M3.4,16.2 H14.6" stroke-width="1.3"/><rect x="6.3" y="6" width="5.4" height="3.8" stroke-width="1.3"/><rect x="3.9" y="10.8" width="4.6" height="4.6" stroke-width="1.3"/><rect x="9.5" y="10.8" width="4.6" height="4.6" stroke-width="1.3"/></g></svg>
<svg style="left:497px;top:254px;" width="17" height="17" viewBox="0 0 17 17"><g fill="none" stroke="#1a80bd" stroke-width="1.3" stroke-linejoin="round" stroke-linecap="butt" ><path d="M3.4,2.6 H0.8 V15.6 H16.2 V2.6 H13.6 M6,2.6 H11"/><path d="M4.7,0.2 V4.6 M12.3,0.2 V4.6"/><rect x="4" y="7.4" width="2.4" height="2.2" fill="#1a80bd" stroke="none"/><rect x="7.6" y="7.4" width="2.4" height="2.2" fill="#1a80bd" stroke="none"/><rect x="11.2" y="7.4" width="2.4" height="2.2" fill="#1a80bd" stroke="none"/><rect x="4" y="10.8" width="2.4" height="2.2" fill="#1a80bd" stroke="none"/><rect x="7.6" y="10.8" width="2.4" height="2.2" fill="#1a80bd" stroke="none"/></g></svg>
<svg style="left:522px;top:254px;" width="18" height="17" viewBox="0 0 18 17"><g fill="none" stroke="#1a80bd" stroke-width="1.4" stroke-linejoin="round" stroke-linecap="butt" ><path d="M8,0.8 L14.6,4 M14.6,12.6 L8,16.2 L1,12.8 V4.2 L8,0.8 M1.2,4.4 L8,7.6 L13.6,5 M8,7.6 V16"/><path d="M10.4,9 H17 M14.6,6.4 L17.4,9 L14.6,11.6" stroke-width="1.4"/></g></svg>
<svg style="left:547.8px;top:254px;" width="18" height="17" viewBox="0 0 18 17"><g fill="none" stroke="#1a80bd" stroke-width="1.3" stroke-linejoin="round" stroke-linecap="butt" ><path d="M6.8,0.6 L11.6,3 V8.4 L6.8,10.8 L2,8.4 V3 Z M2.2,3.2 L6.8,5.4 L11.4,3.2 M6.8,5.4 V10.6" stroke-width="1.2"/><path d="M2.6,14.4 H0.8 V5 M11.8,5.6 H15 Q17.2,6 17.2,8.4 V14.4 H15.8 M14,8.6 H17 M6.4,14.4 H11.4 M0.8,11.8 H12"/><circle cx="4.5" cy="14.6" r="1.7"/><circle cx="13.6" cy="14.6" r="1.7"/></g></svg>
<svg style="left:573.8px;top:255px;" width="15" height="16" viewBox="0 0 15 16"><g fill="none" stroke="#d8d8d8" stroke-width="1.2" stroke-linejoin="round" stroke-linecap="butt" ><path d="M3.6,0.6 Q2,0.6 2,2.2 V6 Q2,7.6 0.4,7.6 Q2,7.6 2,9.2 V13.4 Q2,15 3.6,15"/><path d="M6,2.6 H14.6 M6,5.8 H14.6 M6,9 H14.6 M6,12.2 H14.6" stroke-width="1.5"/></g></svg>
<svg style="left:599px;top:253px" width="2" height="20" viewBox="599 253 2 20"><rect x="599.2" y="253" width="1.5" height="20" fill="#dcdcdc"/></svg>
<svg style="left:606.2px;top:254px;" width="18" height="17" viewBox="0 0 18 17"><g fill="none" stroke="#1a80bd" stroke-width="1.3" stroke-linejoin="round" stroke-linecap="butt" ><path d="M3.4,2.6 H0.8 V15.6 H16.2 V2.6 H13.6 M6,2.6 H11"/><path d="M4.7,0.2 V4.6 M12.3,0.2 V4.6"/><rect x="4" y="7.4" width="2.4" height="2.2" fill="#1a80bd" stroke="none"/><rect x="7.6" y="7.4" width="2.4" height="2.2" fill="#1a80bd" stroke="none"/><rect x="11.2" y="7.4" width="2.4" height="2.2" fill="#1a80bd" stroke="none"/><rect x="4" y="10.8" width="2.4" height="2.2" fill="#1a80bd" stroke="none"/><rect x="7.6" y="10.8" width="2.4" height="2.2" fill="#1a80bd" stroke="none"/></g></svg>
<svg style="left:1577.6px;top:288.8px;" width="8.6" height="8" viewBox="0 0 8.6 8"><path d="M0.9,1 L4.2,5.6 L7.5,1" fill="none" stroke="#6c6c6c" stroke-width="2.1"/></svg>
<span style="left:43.60px;top:282.98px;color:#222;letter-spacing:-0.15px;">Lieferant</span>
<svg style="left:127px;top:279px" width="166" height="27" viewBox="127 279 166 27"><rect x="127.5" y="279.5" width="165" height="26" fill="#fff" stroke="#9a9aa2" stroke-width="1"/></svg>
<span style="left:130.60px;top:282.98px;color:#111;">0</span>
<svg style="left:272.2px;top:286.6px;" width="18" height="13" viewBox="0 0 18 13"><g fill="none" stroke="#1a80bd" stroke-width="1.3" stroke-linejoin="round" stroke-linecap="butt" ><path d="M2.6,10.6 H0.8 V0.8 H11.6 V10.6 H6.6 M11.6,3.6 H15 Q17.2,4 17.2,6.4 V10.6 H15.8 M13.6,6.2 H17 M6.4,10.6 H11.6"/><circle cx="4.5" cy="10.8" r="1.7"/><circle cx="13.8" cy="10.8" r="1.7"/></g></svg>
<svg style="left:297px;top:279px" width="733" height="27" viewBox="297 279 733 27"><rect x="297.5" y="279.5" width="399" height="26" fill="#f0f0f0" stroke="#9a9aa2" stroke-width="1"/><rect x="700.5" y="279.5" width="329" height="26" fill="#fff" stroke="#9a9aa2" stroke-width="1"/></svg>
<svg style="left:1011.6px;top:290.6px;" width="11.3" height="5.6" viewBox="0 0 11.3 5.6"><path d="M0.3,0.3 L5.75,5 L11.2,0.3" fill="none" stroke="#2386c2" stroke-width="1.3"/></svg>
<span style="left:43.60px;top:312.78px;color:#222;">Kommission</span>
<svg style="left:127px;top:309px" width="166" height="27" viewBox="127 309 166 27"><rect x="127.5" y="309.5" width="165" height="26" fill="#fff" stroke="#9a9aa2" stroke-width="1"/></svg>
<svg style="left:275.8px;top:320.2px;" width="11.3" height="5.6" viewBox="0 0 11.3 5.6"><path d="M0.3,0.3 L5.75,5 L11.2,0.3" fill="none" stroke="#2386c2" stroke-width="1.3"/></svg>
<svg style="left:300.8px;top:313.6px;" width="17" height="17" viewBox="0 0 17 17"><g fill="none" stroke="#1a80bd" stroke-width="1.4" stroke-linejoin="round" stroke-linecap="butt" ><path d="M14.7,6.4 A7.3,7.3 0 1 0 15.1,11.6"/><path d="M16.3,1.6 V7 H10.9"/></g></svg>
<svg style="left:325px;top:312px" width="3" height="20" viewBox="325 312 3 20"><rect x="325.8" y="312" width="1.5" height="20" fill="#dcdcdc"/></svg>
<span style="left:335.40px;top:312.78px;color:#222;letter-spacing:0.06px;">Bestell-Nr.</span>
<svg style="left:408px;top:309px" width="111" height="27" viewBox="408 309 111 27"><rect x="408.9" y="309.5" width="109.6" height="26" fill="#fff" stroke="#9a9aa2" stroke-width="1"/></svg>
<span style="left:524.80px;top:312.78px;color:#222;letter-spacing:0.23px;">Nur unbestätigte</span>
<svg style="left:860px;top:309px" width="24" height="27" viewBox="860 309 24 27"><rect x="860.5" y="309.5" width="22.4" height="26" fill="#fff" stroke="#9a9aa2" stroke-width="1"/></svg>
<span style="left:889.00px;top:312.78px;color:#222;letter-spacing:0.2px;">bis</span>
<svg style="left:914px;top:309px" width="116" height="27" viewBox="914 309 116 27"><rect x="914.9" y="309.5" width="114.2" height="26" fill="#fff" stroke="#9a9aa2" stroke-width="1"/></svg>
<span style="left:918.03px;top:312.78px;color:#111;letter-spacing:-0.3px;transform:scaleX(0.9750);transform-origin:0 0;">KW.99.99</span>
<svg style="left:1009px;top:313.8px;" width="17" height="17" viewBox="0 0 17 17"><g fill="none" stroke="#1a80bd" stroke-width="1.3" stroke-linejoin="round" stroke-linecap="butt" ><path d="M3.4,2.6 H0.8 V15.6 H16.2 V2.6 H13.6 M6,2.6 H11"/><path d="M4.7,0.2 V4.6 M12.3,0.2 V4.6"/><rect x="4" y="7.4" width="2.4" height="2.2" fill="#1a80bd" stroke="none"/><rect x="7.6" y="7.4" width="2.4" height="2.2" fill="#1a80bd" stroke="none"/><rect x="11.2" y="7.4" width="2.4" height="2.2" fill="#1a80bd" stroke="none"/><rect x="4" y="10.8" width="2.4" height="2.2" fill="#1a80bd" stroke="none"/><rect x="7.6" y="10.8" width="2.4" height="2.2" fill="#1a80bd" stroke="none"/></g></svg>
<svg style="left:1033px;top:312px" width="2" height="20" viewBox="1033 312 2 20"><rect x="1033.4" y="312" width="1.5" height="20" fill="#dcdcdc"/></svg>
<svg style="left:1041px;top:312.6px;" width="18" height="17" viewBox="0 0 18 17"><g fill="none" stroke="#1a80bd" stroke-width="1.4" stroke-linejoin="round" stroke-linecap="butt" ><path d="M2.2,2.6 H17.4 L11.8,9.2 V14.6 M9,16.6 V9.2 L5.6,5.2"/><path d="M0.4,0.4 L16.6,16.4" stroke="#fff" stroke-width="3.4"/><path d="M0.6,0 L17,16.2"/></g></svg>
<span style="left:1062.80px;top:312.78px;color:#222;letter-spacing:-0.26px;">Kein Filter</span>
<svg style="left:38px;top:339px" width="1549" height="493" viewBox="38 339 1549 493"><rect x="38.6" y="339.7" width="1548.2" height="1.3" fill="#a8a8b0"/><rect x="38.6" y="339.7" width="1.3" height="492" fill="#a8a8b0"/><rect x="40" y="341" width="1125" height="48" fill="#fafafa"/><rect x="40" y="388.9" width="1125" height="2.1" fill="#c6c6c6"/><rect x="84" y="345.6" width="1" height="41.8" fill="#cccccc"/><rect x="184" y="345.6" width="1" height="41.8" fill="#cccccc"/><rect x="261.4" y="345.6" width="1" height="41.8" fill="#cccccc"/><rect x="350" y="345.6" width="1" height="41.8" fill="#cccccc"/><rect x="432.8" y="345.6" width="1" height="41.8" fill="#cccccc"/><rect x="499" y="345.6" width="1" height="41.8" fill="#cccccc"/><rect x="915" y="345.6" width="1" height="41.8" fill="#cccccc"/><rect x="1008.8" y="345.6" width="1" height="41.8" fill="#cccccc"/><rect x="1053.2" y="345.6" width="1" height="41.8" fill="#cccccc"/></svg>
<span style="left:49.40px;top:345.28px;color:#111;letter-spacing:-0.2px;">Sto.</span>
<span style="left:87.20px;top:345.28px;color:#111;letter-spacing:-0.2px;">Lieferant</span>
<span style="left:192.40px;top:345.28px;color:#111;letter-spacing:0.08px;">Bestell-Nr.</span>
<span style="left:264.20px;top:345.28px;color:#111;letter-spacing:-0.04px;">Kommission</span>
<span style="left:353.00px;top:345.28px;color:#111;">Termin</span>
<span style="left:445.20px;top:345.28px;color:#111;letter-spacing:-0.16px;">Abrufe</span>
<span style="left:502.41px;top:345.28px;color:#111;letter-spacing:-0.3px;transform:scaleX(0.9924);transform-origin:0 0;">Bezeichnung</span>
<span style="left:1013.00px;top:345.28px;color:#111;letter-spacing:-0.3px;">Währ.</span>
<span style="left:873.00px;top:345.28px;color:#111;letter-spacing:0.4px;">ME</span>
<span style="left:975.03px;top:345.28px;color:#111;letter-spacing:-0.3px;transform:scaleX(0.9740);transform-origin:0 0;">Preis</span>
<span style="left:1133.40px;top:345.28px;color:#111;letter-spacing:-0.3px;transform:scaleX(0.9701);transform-origin:0 0;">Wert</span>
<svg style="left:40px;top:390px" width="1125" height="50" viewBox="40 390 1125 50"><rect x="40" y="438.65" width="1124.8" height="1.1" fill="#c6c6c6"/><rect x="351.2" y="390.7" width="82.8" height="47.55" fill="#e6b8b7"/></svg>
<span style="left:51.00px;top:394.18px;color:#111;letter-spacing:-0.3px;transform:scaleX(0.9573);transform-origin:0 0;">000</span>
<span style="left:87.30px;top:394.18px;color:#111;letter-spacing:-0.3px;transform:scaleX(0.9047);transform-origin:0 0;">ELOXAL</span>
<span style="left:202.20px;top:394.18px;color:#111;letter-spacing:-0.3px;transform:scaleX(0.9845);transform-origin:0 0;">730755 1</span>
<span style="left:353.02px;top:394.18px;color:#111;letter-spacing:-0.3px;transform:scaleX(0.9816);transform-origin:0 0;">KW.30.23</span>
<span style="left:502.40px;top:394.18px;color:#111;letter-spacing:-0.05px;">Bestellung Sonstiges</span>
<span style="left:972.91px;top:394.18px;color:#111;letter-spacing:-0.3px;transform:scaleX(0.9882);transform-origin:0 0;">10,34</span>
<span style="left:1012.09px;top:394.18px;color:#111;letter-spacing:-0.3px;transform:scaleX(0.9085);transform-origin:0 0;">EUR</span>
<span style="left:1127.91px;top:394.18px;color:#111;letter-spacing:-0.3px;transform:scaleX(0.9882);transform-origin:0 0;">10,34</span>
<svg style="left:40px;top:439px" width="1125" height="50" viewBox="40 439 1125 50"><rect x="40" y="487.3" width="1124.8" height="1.1" fill="#c6c6c6"/><rect x="351.2" y="439.35" width="82.8" height="47.55" fill="#e6b8b7"/></svg>
<span style="left:51.00px;top:442.83px;color:#111;letter-spacing:-0.3px;transform:scaleX(0.9573);transform-origin:0 0;">000</span>
<span style="left:87.30px;top:442.83px;color:#111;letter-spacing:-0.3px;transform:scaleX(0.9047);transform-origin:0 0;">ELOXAL</span>
<span style="left:202.20px;top:442.83px;color:#111;letter-spacing:-0.3px;transform:scaleX(0.9845);transform-origin:0 0;">730755 2</span>
<span style="left:353.02px;top:442.83px;color:#111;letter-spacing:-0.3px;transform:scaleX(0.9816);transform-origin:0 0;">KW.30.23</span>
<span style="left:502.40px;top:442.83px;color:#111;letter-spacing:-0.05px;">Bestellung Sonstiges</span>
<span style="left:972.91px;top:442.83px;color:#111;letter-spacing:-0.3px;transform:scaleX(0.9882);transform-origin:0 0;">10,34</span>
<span style="left:1012.09px;top:442.83px;color:#111;letter-spacing:-0.3px;transform:scaleX(0.9085);transform-origin:0 0;">EUR</span>
<span style="left:1128.90px;top:442.83px;color:#111;letter-spacing:-0.3px;transform:scaleX(0.9598);transform-origin:0 0;">31,02</span>
<svg style="left:40px;top:488px" width="1125" height="50" viewBox="40 488 1125 50"><rect x="40" y="535.95" width="1124.8" height="1.1" fill="#c6c6c6"/><rect x="351.2" y="488" width="82.8" height="47.55" fill="#e6b8b7"/></svg>
<span style="left:51.00px;top:491.48px;color:#111;letter-spacing:-0.3px;transform:scaleX(0.9573);transform-origin:0 0;">000</span>
<span style="left:87.30px;top:491.48px;color:#111;letter-spacing:-0.3px;transform:scaleX(0.9047);transform-origin:0 0;">ELOXAL</span>
<span style="left:202.20px;top:491.48px;color:#111;letter-spacing:-0.3px;transform:scaleX(0.9845);transform-origin:0 0;">730755 3</span>
<span style="left:353.02px;top:491.48px;color:#111;letter-spacing:-0.3px;transform:scaleX(0.9816);transform-origin:0 0;">KW.30.23</span>
<span style="left:502.40px;top:491.48px;color:#111;letter-spacing:-0.05px;">Bestellung Sonstiges</span>
<span style="left:965.31px;top:491.48px;color:#111;letter-spacing:-0.3px;transform:scaleX(0.9880);transform-origin:0 0;">109,20</span>
<span style="left:1012.09px;top:491.48px;color:#111;letter-spacing:-0.3px;transform:scaleX(0.9085);transform-origin:0 0;">EUR</span>
<span style="left:1120.90px;top:491.48px;color:#111;letter-spacing:-0.3px;transform:scaleX(0.9741);transform-origin:0 0;">218,40</span>
<svg style="left:40px;top:584px" width="1125" height="2" viewBox="40 584 1125 2"><rect x="40" y="584.6" width="1124.8" height="1.1" fill="#c6c6c6"/></svg>
<span style="left:51.00px;top:540.13px;color:#111;letter-spacing:-0.3px;transform:scaleX(0.9573);transform-origin:0 0;">000</span>
<span style="left:87.30px;top:540.13px;color:#111;letter-spacing:-0.3px;transform:scaleX(0.9047);transform-origin:0 0;">ELOXAL</span>
<span style="left:202.20px;top:540.13px;color:#111;letter-spacing:-0.3px;transform:scaleX(0.9845);transform-origin:0 0;">728787 1</span>
<span style="left:354.00px;top:540.13px;color:#111;letter-spacing:-0.3px;transform:scaleX(0.9722);transform-origin:0 0;">31.12.23</span>
<span style="left:502.40px;top:540.13px;color:#111;letter-spacing:-0.05px;">Bestellung Sonstiges</span>
<span style="left:981.10px;top:540.13px;color:#111;letter-spacing:-0.3px;transform:scaleX(0.9668);transform-origin:0 0;">0,00</span>
<span style="left:1012.09px;top:540.13px;color:#111;letter-spacing:-0.3px;transform:scaleX(0.9085);transform-origin:0 0;">EUR</span>
<span style="left:1136.10px;top:540.13px;color:#111;letter-spacing:-0.3px;transform:scaleX(0.9668);transform-origin:0 0;">0,00</span>
<svg style="left:40px;top:585px" width="1125" height="50" viewBox="40 585 1125 50"><rect x="40" y="633.25" width="1124.8" height="1.1" fill="#c6c6c6"/><rect x="351.2" y="585.3" width="82.8" height="47.55" fill="#e6b8b7"/></svg>
<span style="left:51.00px;top:588.78px;color:#111;letter-spacing:-0.3px;transform:scaleX(0.9573);transform-origin:0 0;">000</span>
<span style="left:87.30px;top:588.78px;color:#111;letter-spacing:-0.3px;transform:scaleX(0.9047);transform-origin:0 0;">ELOXAL</span>
<span style="left:202.20px;top:588.78px;color:#111;letter-spacing:-0.3px;transform:scaleX(0.9845);transform-origin:0 0;">730413 1</span>
<span style="left:353.02px;top:588.78px;color:#111;letter-spacing:-0.3px;transform:scaleX(0.9816);transform-origin:0 0;">KW.30.23</span>
<span style="left:502.40px;top:588.78px;color:#111;letter-spacing:-0.06px;">Dichtung Front II</span>
<span style="left:871.65px;top:588.78px;color:#111;letter-spacing:-0.3px;transform:scaleX(0.9470);transform-origin:0 0;">STK</span>
<span style="left:981.10px;top:588.78px;color:#111;letter-spacing:-0.3px;transform:scaleX(0.9668);transform-origin:0 0;">2,50</span>
<span style="left:1012.09px;top:588.78px;color:#111;letter-spacing:-0.3px;transform:scaleX(0.9085);transform-origin:0 0;">EUR</span>
<span style="left:1120.90px;top:588.78px;color:#111;letter-spacing:-0.3px;transform:scaleX(0.9741);transform-origin:0 0;">452,50</span>
<svg style="left:40px;top:633px" width="1125" height="50" viewBox="40 633 1125 50"><rect x="40" y="681.9" width="1124.8" height="1.1" fill="#c6c6c6"/><rect x="351.2" y="633.95" width="82.8" height="47.55" fill="#e6b8b7"/></svg>
<span style="left:51.00px;top:637.43px;color:#111;letter-spacing:-0.3px;transform:scaleX(0.9573);transform-origin:0 0;">000</span>
<span style="left:87.30px;top:637.43px;color:#111;letter-spacing:-0.3px;transform:scaleX(0.9047);transform-origin:0 0;">ELOXAL</span>
<span style="left:202.20px;top:637.43px;color:#111;letter-spacing:-0.3px;transform:scaleX(0.9845);transform-origin:0 0;">730710 1</span>
<span style="left:353.02px;top:637.43px;color:#111;letter-spacing:-0.3px;transform:scaleX(0.9816);transform-origin:0 0;">KW.31.23</span>
<span style="left:503.40px;top:637.43px;color:#111;letter-spacing:-0.13px;">O-Ring  20 x 1,5</span>
<span style="left:871.65px;top:637.43px;color:#111;letter-spacing:-0.3px;transform:scaleX(0.9470);transform-origin:0 0;">STK</span>
<span style="left:980.93px;top:637.43px;color:#111;letter-spacing:-0.3px;transform:scaleX(0.9732);transform-origin:0 0;">1,15</span>
<span style="left:1012.09px;top:637.43px;color:#111;letter-spacing:-0.3px;transform:scaleX(0.9085);transform-origin:0 0;">EUR</span>
<span style="left:1127.91px;top:637.43px;color:#111;letter-spacing:-0.3px;transform:scaleX(0.9882);transform-origin:0 0;">57,50</span>
<svg style="left:40px;top:730px" width="1125" height="2" viewBox="40 730 1125 2"><rect x="40" y="730.55" width="1124.8" height="1.1" fill="#c6c6c6"/></svg>
<span style="left:51.00px;top:686.08px;color:#111;letter-spacing:-0.3px;transform:scaleX(0.9573);transform-origin:0 0;">000</span>
<span style="left:87.30px;top:686.08px;color:#111;letter-spacing:-0.3px;transform:scaleX(0.9047);transform-origin:0 0;">ELOXAL</span>
<span style="left:202.20px;top:686.08px;color:#111;letter-spacing:-0.3px;transform:scaleX(0.9845);transform-origin:0 0;">728788 1</span>
<span style="left:354.00px;top:686.08px;color:#111;letter-spacing:-0.3px;transform:scaleX(0.9722);transform-origin:0 0;">31.12.23</span>
<span style="left:502.40px;top:686.08px;color:#111;letter-spacing:-0.05px;">Bestellung Sonstiges</span>
<span style="left:981.10px;top:686.08px;color:#111;letter-spacing:-0.3px;transform:scaleX(0.9668);transform-origin:0 0;">0,00</span>
<span style="left:1012.09px;top:686.08px;color:#111;letter-spacing:-0.3px;transform:scaleX(0.9085);transform-origin:0 0;">EUR</span>
<span style="left:1136.10px;top:686.08px;color:#111;letter-spacing:-0.3px;transform:scaleX(0.9668);transform-origin:0 0;">0,00</span>
<svg style="left:40px;top:779px" width="1125" height="2" viewBox="40 779 1125 2"><rect x="40" y="779.2" width="1124.8" height="1.1" fill="#c6c6c6"/></svg>
<span style="left:51.00px;top:734.73px;color:#111;letter-spacing:-0.3px;transform:scaleX(0.9573);transform-origin:0 0;">000</span>
<span style="left:87.30px;top:734.73px;color:#111;letter-spacing:-0.3px;transform:scaleX(0.9047);transform-origin:0 0;">ELOXAL</span>
<span style="left:202.20px;top:734.73px;color:#111;letter-spacing:-0.3px;transform:scaleX(0.9845);transform-origin:0 0;">730141 1</span>
<span style="left:353.02px;top:734.73px;color:#111;letter-spacing:-0.3px;transform:scaleX(0.9816);transform-origin:0 0;">KW.50.23</span>
<span style="left:502.40px;top:734.73px;color:#111;letter-spacing:-0.04px;">Kaltgerätestecker</span>
<span style="left:871.65px;top:734.73px;color:#111;letter-spacing:-0.3px;transform:scaleX(0.9470);transform-origin:0 0;">STK</span>
<span style="left:973.30px;top:734.73px;color:#111;letter-spacing:-0.25px;">11,74</span>
<span style="left:1012.09px;top:734.73px;color:#111;letter-spacing:-0.3px;transform:scaleX(0.9085);transform-origin:0 0;">EUR</span>
<span style="left:1108.50px;top:734.73px;color:#111;letter-spacing:-0.3px;transform:scaleX(0.9981);transform-origin:0 0;">5.870,00</span>
<svg style="left:40px;top:779px" width="1125" height="50" viewBox="40 779 1125 50"><rect x="40.8" y="779.95" width="1124" height="48.15" fill="#0078d7"/></svg>
<span style="left:51.00px;top:783.38px;color:#fff;letter-spacing:-0.3px;transform:scaleX(0.9573);transform-origin:0 0;">000</span>
<span style="left:87.30px;top:783.38px;color:#fff;letter-spacing:-0.3px;transform:scaleX(0.9047);transform-origin:0 0;">ELOXAL</span>
<span style="left:202.20px;top:783.38px;color:#fff;letter-spacing:-0.3px;transform:scaleX(0.9845);transform-origin:0 0;">730734 1</span>
<span style="left:353.02px;top:783.38px;color:#fff;letter-spacing:-0.3px;transform:scaleX(0.9816);transform-origin:0 0;">KW.40.23</span>
<span style="left:503.40px;top:783.38px;color:#fff;letter-spacing:-0.08px;">Wippenschalter</span>
<span style="left:871.65px;top:783.38px;color:#fff;letter-spacing:-0.3px;transform:scaleX(0.9470);transform-origin:0 0;">STK</span>
<span style="left:981.10px;top:783.38px;color:#fff;letter-spacing:-0.3px;transform:scaleX(0.9668);transform-origin:0 0;">3,99</span>
<span style="left:1012.09px;top:783.38px;color:#fff;letter-spacing:-0.3px;transform:scaleX(0.9085);transform-origin:0 0;">EUR</span>
<span style="left:1120.90px;top:783.38px;color:#fff;letter-spacing:-0.3px;transform:scaleX(0.9741);transform-origin:0 0;">399,00</span>
<svg style="left:40px;top:831px" width="1547" height="2" viewBox="40 831 1547 2"><rect x="40" y="831" width="1546.6" height="1.8" fill="#bcbcc0"/></svg>
<span style="left:42.00px;top:840.98px;color:#111;letter-spacing:-0.16px;">Summe Total</span>
<svg style="left:132px;top:836px" width="177" height="28" viewBox="132 836 177 28"><rect x="132.5" y="837.1" width="175.6" height="25.8" fill="#fff" stroke="#9a9aa2" stroke-width="1"/></svg>
<svg style="left:319.6px;top:840.8px;" width="17" height="17" viewBox="0 0 17 17"><g fill="none" stroke="#1a80bd" stroke-width="1.4" stroke-linejoin="round" stroke-linecap="butt" ><path d="M14.7,6.4 A7.3,7.3 0 1 0 15.1,11.6"/><path d="M16.3,1.6 V7 H10.9"/></g></svg>
<span style="left:340.80px;top:840.18px;color:#1a78b4;letter-spacing:-0.18px;">Summe aktualisieren</span>
<svg style="left:39px;top:871px" width="203" height="4" viewBox="39 871 203 4"><rect x="39.6" y="871.4" width="201.6" height="3" fill="#0a72c2"/></svg>
<svg style="left:75px;top:883.4px;" width="18" height="13" viewBox="0 0 18 13"><g fill="none" stroke="#1a80bd" stroke-width="1.3" stroke-linejoin="round" stroke-linecap="butt" ><path d="M2.6,10.6 H0.8 V0.8 H11.6 V10.6 H6.6 M11.6,3.6 H15 Q17.2,4 17.2,6.4 V10.6 H15.8 M13.6,6.2 H17 M6.4,10.6 H11.6"/><circle cx="4.5" cy="10.8" r="1.7"/><circle cx="13.8" cy="10.8" r="1.7"/></g></svg>
<span style="left:100.20px;top:879.70px;font-size:17.6px;color:#111;letter-spacing:-0.2px;">Lieferanten</span>
<svg style="left:225px;top:883px;" width="11" height="11" viewBox="0 0 11 11"><g fill="none" stroke="#333" stroke-width="1.2" stroke-linejoin="round" stroke-linecap="butt" ><path d="M0.4,0.4 L10.6,10.6 M10.6,0.4 L0.4,10.6"/></g></svg>
<div style="left:1581px;top:896px;width:0;height:0;border-left:3.8px solid transparent;border-right:3.8px solid transparent;border-top:3.6px solid #555;"></div>
<div style="left:608px;top:239.4px;width:274.4px;height:670px;background:#fff;border:1px solid #a0a0a0;box-sizing:border-box;box-shadow:1px 1px 2px rgba(0,0,0,0.18);"></div>
<svg style="left:600px;top:550px" width="280" height="56" viewBox="600 550 280 56"><path d="M609.6,566 Q609.8,563.4 613,563.3 L645,563.1 Q700,561.6 756,558.3 L845.6,558.1 L845.8,562.3 L864.6,562.8 Q866.6,563 866.5,566 L866.3,586 Q866,592.6 858,594 Q845,596 800,595.6 L690,595.6 Q640,594.4 612,593 Q609.6,592.6 609.6,589 Z" fill="#ffe600"/></svg>
<svg style="left:645px;top:273px" width="228" height="449" viewBox="645 273 228 449"><rect x="645.4" y="273.7" width="227" height="1" fill="#d6d6d6"/><rect x="645.4" y="338.9" width="227" height="1" fill="#d6d6d6"/><rect x="645.4" y="466" width="227" height="1" fill="#d6d6d6"/><rect x="866.4" y="562.5" width="6" height="1" fill="#d6d6d6"/><rect x="645.4" y="720.9" width="227" height="1" fill="#d6d6d6"/></svg>
<span style="left:650.60px;top:247.88px;color:#303030;letter-spacing:-0.28px;"><u>L</u>öschen</span>
<span style="left:834.98px;top:247.88px;color:#303030;letter-spacing:-0.3px;transform:scaleX(0.8153);transform-origin:0 0;">F6</span>
<svg style="left:617.9px;top:248.1px;" width="15" height="17" viewBox="0 0 15 17"><g fill="none" stroke="#1a80bd" stroke-width="2" stroke-linejoin="round" stroke-linecap="butt" ><path d="M0,3.6 H15 M4.8,3.4 V1.6 Q4.8,0.8 5.6,0.8 H9.4 Q10.2,0.8 10.2,1.6 V3.4" stroke-width="1.5"/><path d="M1.7,4 V15.2 Q1.7,16.4 2.9,16.4 H12.1 Q13.3,16.4 13.3,15.2 V4" stroke-width="1.5"/><path d="M5,6.6 V13.8 M7.5,6.6 V13.8 M10,6.6 V13.8" stroke-width="1.5"/></g></svg>
<span style="left:650.60px;top:282.38px;color:#303030;letter-spacing:0.07px;"><u>P</u>osition splitten</span>
<span style="left:834.98px;top:282.38px;color:#303030;letter-spacing:-0.3px;transform:scaleX(0.8153);transform-origin:0 0;">F9</span>
<svg style="left:616.4px;top:283.6px;" width="18" height="17" viewBox="0 0 18 17"><g fill="none" stroke="#1a80bd" stroke-width="2" stroke-linejoin="round" stroke-linecap="butt" ><path d="M1,9.4 V0.8 H9.6 L13.4,4.6 V8 M4.6,16.4 H17.6 V8.6" stroke-width="1.5"/><path d="M3,3.4 H8.6 M3,5.6 H10.4 M3,7.8 H10.4 M9,13 H15.6 M11,10.8 H15.6" stroke-width="1.2"/><path d="M0.2,12.6 L18.8,7.2" stroke-width="2"/></g></svg>
<span style="left:650.60px;top:312.78px;color:#b4b4b4;letter-spacing:-0.06px;"><u>R</u>ückstand abrufen</span>
<span style="left:797.80px;top:312.78px;color:#b4b4b4;letter-spacing:-0.2px;">Strg+F9</span>
<svg style="left:616.4px;top:314.00000000000006px;" width="18" height="17" viewBox="0 0 18 17"><g fill="none" stroke="#d8d8d8" stroke-width="1.2" stroke-linejoin="round" stroke-linecap="butt" ><path d="M4,3.6 V0.8 H11 L15.2,5 V16.2 H4 V13.4 M10.8,1 V5.2 H15"/><path d="M5.4,4.6 L9.8,6.8 V11.6 L5.4,13.8 L1,11.6 V6.8 Z M1.2,7 L5.4,9 L9.6,7 M5.4,9 V13.6" stroke-width="1"/></g></svg>
<span style="left:650.63px;top:347.28px;color:#303030;letter-spacing:-0.3px;transform:scaleX(0.9656);transform-origin:0 0;"><u>B</u>uchen</span>
<span style="left:834.98px;top:347.28px;color:#303030;letter-spacing:-0.3px;transform:scaleX(0.8153);transform-origin:0 0;">F8</span>
<svg style="left:616.4px;top:348.50000000000006px;" width="18" height="17" viewBox="0 0 18 17"><g fill="none" stroke="#1a80bd" stroke-width="1.3" stroke-linejoin="round" stroke-linecap="butt" ><path d="M1,3.4 V1 H10 L14,5 V9.6 M9.8,1.2 V5.2 H13.8 M1,12.6 V15.8 H8.4"/><path d="M5.2,4.2 L9,6 V10.6 L5.2,12.4 L1.4,10.6 V6 Z M1.6,6.2 L5.2,8 L8.8,6.2 M5.2,8 V12.2" stroke-width="1"/><path d="M10.4,13.8 L12.8,16 L16.8,11.6" stroke-width="1.4"/></g></svg>
<span style="left:650.63px;top:378.28px;color:#303030;letter-spacing:-0.3px;transform:scaleX(0.9686);transform-origin:0 0;">S<u>c</u>annen</span>
<svg style="left:868.2px;top:382.90000000000003px;" width="6.4" height="10" viewBox="0 0 6.4 10"><path d="M0.6,0.4 L5.6,5 L0.6,9.6" fill="none" stroke="#1a80bd" stroke-width="1.5"/></svg>
<svg style="left:616.4px;top:379.50000000000006px;" width="18" height="17" viewBox="0 0 18 17"><g fill="#1a80bd" stroke="#1a80bd" stroke-linejoin="round"><path d="M5.4,0.6 L8.6,0.9 L17.2,8.4 L15.6,9.6 Z" stroke-width="0.9"/><path d="M0.6,9.8 L9.2,5.9 L17.4,10 L17.4,11.4 L7.6,16.2 L0.6,11.6 Z" stroke-width="0.9"/><path d="M3.4,9.9 L9.1,7.4 L10.6,8.2 L5,10.9 Z M6.2,11.7 L11.8,8.9 L13.9,10 L8,12.9 Z" fill="#fff" stroke="none"/></g></svg>
<span style="left:650.60px;top:409.48px;color:#303030;letter-spacing:-0.28px;">Dr<u>u</u>cken</span>
<svg style="left:868.2px;top:414.1px;" width="6.4" height="10" viewBox="0 0 6.4 10"><path d="M0.6,0.4 L5.6,5 L0.6,9.6" fill="none" stroke="#1a80bd" stroke-width="1.5"/></svg>
<svg style="left:616.4px;top:410.70000000000005px;" width="18" height="17" viewBox="0 0 18 17"><g fill="none" stroke="#1a80bd" stroke-width="1.5" stroke-linejoin="round" stroke-linecap="butt" ><path d="M4,3.8 V0.8 H14 V3.8" stroke-width="1.4"/><path d="M4,12.4 H1.6 Q0.8,12.4 0.8,11.6 V5.4 Q0.8,4 2.2,4 H15.8 Q17.2,4 17.2,5.4 V11.6 Q17.2,12.4 16.4,12.4 H14"/><rect x="4" y="9.4" width="10" height="6.6"/></g></svg>
<span style="left:650.60px;top:440.18px;color:#303030;letter-spacing:-0.3px;transform:scaleX(0.9971);transform-origin:0 0;">Beleg</span>
<svg style="left:868.2px;top:444.8px;" width="6.4" height="10" viewBox="0 0 6.4 10"><path d="M0.6,0.4 L5.6,5 L0.6,9.6" fill="none" stroke="#1a80bd" stroke-width="1.5"/></svg>
<svg style="left:616.4px;top:441.40000000000003px;" width="18" height="17" viewBox="0 0 18 17"><g fill="none" stroke="#1a80bd" stroke-width="1.4" stroke-linejoin="round" stroke-linecap="butt" ><rect x="0.8" y="0.8" width="4.4" height="15.4"/><path d="M5.2,2.6 H8.4 V16.2 H5.2"/><path d="M9.6,5 L12.6,4.2 L17.2,15.4 L14.4,16.4 Z"/></g></svg>
<span style="left:651.60px;top:474.68px;color:#303030;letter-spacing:-0.14px;"><u>T</u>ermin-Raster</span>
<span style="left:805.20px;top:474.68px;color:#303030;letter-spacing:-0.12px;">Strg+T</span>
<svg style="left:616.4px;top:475.90000000000003px;" width="18" height="17" viewBox="0 0 18 17"><g fill="none" stroke="#1a80bd" stroke-width="1.3" stroke-linejoin="round" stroke-linecap="butt" ><path d="M3.4,2.6 H0.8 V15.6 H16.2 V2.6 H13.6 M6,2.6 H11"/><path d="M4.7,0.2 V4.6 M12.3,0.2 V4.6"/><rect x="4" y="7.4" width="2.4" height="2.2" fill="#1a80bd" stroke="none"/><rect x="7.6" y="7.4" width="2.4" height="2.2" fill="#1a80bd" stroke="none"/><rect x="11.2" y="7.4" width="2.4" height="2.2" fill="#1a80bd" stroke="none"/><rect x="4" y="10.8" width="2.4" height="2.2" fill="#1a80bd" stroke="none"/><rect x="7.6" y="10.8" width="2.4" height="2.2" fill="#1a80bd" stroke="none"/></g></svg>
<span style="left:651.60px;top:505.58px;color:#303030;letter-spacing:-0.19px;"><u>V</u>erbräuche</span>
<span style="left:790.21px;top:505.58px;color:#303030;letter-spacing:-0.23px;">Strg+F12</span>
<svg style="left:616.4px;top:506.80000000000007px;" width="18" height="17" viewBox="0 0 18 17"><g fill="none" stroke="#1a80bd" stroke-width="1.4" stroke-linejoin="round" stroke-linecap="butt" ><path d="M8,0.8 L14.6,4 M14.6,12.6 L8,16.2 L1,12.8 V4.2 L8,0.8 M1.2,4.4 L8,7.6 L13.6,5 M8,7.6 V16"/><path d="M10.4,9 H17 M14.6,6.4 L17.4,9 L14.6,11.6" stroke-width="1.4"/></g></svg>
<span style="left:651.60px;top:536.58px;color:#303030;letter-spacing:-0.07px;"><u>A</u>rtikel-Lieferanten</span>
<span style="left:804.80px;top:536.58px;color:#303030;letter-spacing:-0.04px;">Strg+Z</span>
<svg style="left:616.4px;top:537.8000000000001px;" width="18" height="17" viewBox="0 0 18 17"><g fill="none" stroke="#1a80bd" stroke-width="1.3" stroke-linejoin="round" stroke-linecap="butt" ><path d="M6.8,0.6 L11.6,3 V8.4 L6.8,10.8 L2,8.4 V3 Z M2.2,3.2 L6.8,5.4 L11.4,3.2 M6.8,5.4 V10.6" stroke-width="1.2"/><path d="M2.6,14.4 H0.8 V5 M11.8,5.6 H15 Q17.2,6 17.2,8.4 V14.4 H15.8 M14,8.6 H17 M6.4,14.4 H11.4 M0.8,11.8 H12"/><circle cx="4.5" cy="14.6" r="1.7"/><circle cx="13.6" cy="14.6" r="1.7"/></g></svg>
<span style="left:650.60px;top:570.98px;color:#4a4400;letter-spacing:-0.13px;">Einstellungen speic<u>h</u>ern</span>
<svg style="left:616.4px;top:572.2px;" width="18" height="17" viewBox="0 0 18 17"><g fill="none" stroke="#58a81c" stroke-width="1.5" stroke-linejoin="round" stroke-linecap="butt" ><rect x="0.9" y="0.9" width="15.2" height="15.2" rx="2"/><path d="M4.2,1 V5.6 H12 V1 M3.6,16 V10.4 H13.4 V16"/></g></svg>
<span style="left:650.60px;top:601.98px;color:#303030;letter-spacing:-0.09px;">Einstellungen laden</span>
<svg style="left:616.4px;top:603.2px;" width="18" height="17" viewBox="0 0 18 17"><g fill="none" stroke="#1a80bd" stroke-width="1.3" stroke-linejoin="round" stroke-linecap="butt" ><path d="M0.8,4 V0.8 H5.6 L7.4,3.4 H17.2 V15.2 H0.8 V4 H7.2"/></g></svg>
<span style="left:650.60px;top:632.98px;color:#303030;letter-spacing:0.01px;">Standard Br<u>o</u>wser laden</span>
<svg style="left:616.4px;top:634.2px;" width="18" height="17" viewBox="0 0 18 17"><g fill="none" stroke="#1a80bd" stroke-width="1.3" stroke-linejoin="round" stroke-linecap="butt" ><path d="M0.8,4 V0.8 H5.6 L7.4,3.4 H17.2 V15.2 H0.8 V4 H7.2"/></g></svg>
<span style="left:650.60px;top:664.18px;color:#303030;letter-spacing:-0.11px;">St<u>y</u>le-Guide Design anwenden</span>
<span style="left:650.60px;top:695.28px;color:#303030;letter-spacing:0.06px;">Inhalt <u>K</u>opieren</span>
<span style="left:803.20px;top:695.28px;color:#303030;letter-spacing:0.08px;">Strg+C</span>
<svg style="left:616.4px;top:696.5px;" width="18" height="17" viewBox="0 0 18 17"><g fill="none" stroke="#d0d0d0" stroke-width="1.1" stroke-linejoin="round" stroke-linecap="butt" ><path d="M1,8 L7.4,1.4 L14.6,2.4 L17,9 L10.6,16 Z"/><path d="M14,6 Q16,9 13,12" stroke-width="0.8"/></g></svg>
<span style="left:650.60px;top:729.38px;color:#303030;letter-spacing:-0.13px;">N<u>e</u>ue Spalte</span>
<svg style="left:617.6px;top:731.4px;" width="15.4" height="15.4" viewBox="0 0 15.4 15.4"><g fill="none" stroke="#1a80bd" stroke-width="1.5" stroke-linejoin="round" stroke-linecap="butt" ><path d="M0,7.7 H15.4 M7.7,0 V15.4"/></g></svg>
<span style="left:650.60px;top:760.48px;color:#303030;letter-spacing:-0.15px;">Spalte lö<u>s</u>chen</span>
<svg style="left:617.9px;top:760.7px;" width="15" height="17" viewBox="0 0 15 17"><g fill="none" stroke="#1a80bd" stroke-width="2" stroke-linejoin="round" stroke-linecap="butt" ><path d="M0,3.6 H15 M4.8,3.4 V1.6 Q4.8,0.8 5.6,0.8 H9.4 Q10.2,0.8 10.2,1.6 V3.4" stroke-width="1.5"/><path d="M1.7,4 V15.2 Q1.7,16.4 2.9,16.4 H12.1 Q13.3,16.4 13.3,15.2 V4" stroke-width="1.5"/><path d="M5,6.6 V13.8 M7.5,6.6 V13.8 M10,6.6 V13.8" stroke-width="1.5"/></g></svg>
<span style="left:650.60px;top:791.38px;color:#303030;letter-spacing:-0.2px;">Spalten-E<u>i</u>genschaften..</span>
<span style="left:650.60px;top:822.48px;color:#303030;letter-spacing:-0.17px;">Browser-Ei<u>g</u>enschaften..</span>
<span style="left:650.60px;top:853.28px;color:#303030;letter-spacing:-0.13px;">Spalten an<u>z</u>eigen</span>
<svg style="left:868.2px;top:857.9px;" width="6.4" height="10" viewBox="0 0 6.4 10"><path d="M0.6,0.4 L5.6,5 L0.6,9.6" fill="none" stroke="#1a80bd" stroke-width="1.5"/></svg>
<svg style="left:616.6px;top:854.3px;" width="17" height="16" viewBox="0 0 17 16"><g fill="none"><rect x="0.5" y="0.5" width="14" height="10" stroke="#9a9a9a" stroke-width="1"/><path d="M0.5,3 H14.5 M3.6,0.5 V10.5 M0.5,6 H14.5" stroke="#b0b0b0" stroke-width="0.8"/><rect x="5" y="6.6" width="11" height="8" fill="#fff" stroke="#3a14c8" stroke-width="1.2"/><rect x="5" y="6.6" width="11" height="2.2" fill="#3a14c8"/><path d="M7,12.6 H14" stroke="#333" stroke-width="1.2"/></g></svg>
<span style="left:650.60px;top:883.88px;color:#303030;letter-spacing:-0.11px;">Browser drucken..</span>
<svg style="left:616.4px;top:885.1px;" width="18" height="17" viewBox="0 0 18 17"><g fill="none" stroke="#1a80bd" stroke-width="1.5" stroke-linejoin="round" stroke-linecap="butt" ><path d="M4,3.8 V0.8 H14 V3.8" stroke-width="1.4"/><path d="M4,12.4 H1.6 Q0.8,12.4 0.8,11.6 V5.4 Q0.8,4 2.2,4 H15.8 Q17.2,4 17.2,5.4 V11.6 Q17.2,12.4 16.4,12.4 H14"/><rect x="4" y="9.4" width="10" height="6.6"/></g></svg>
</body></html>
